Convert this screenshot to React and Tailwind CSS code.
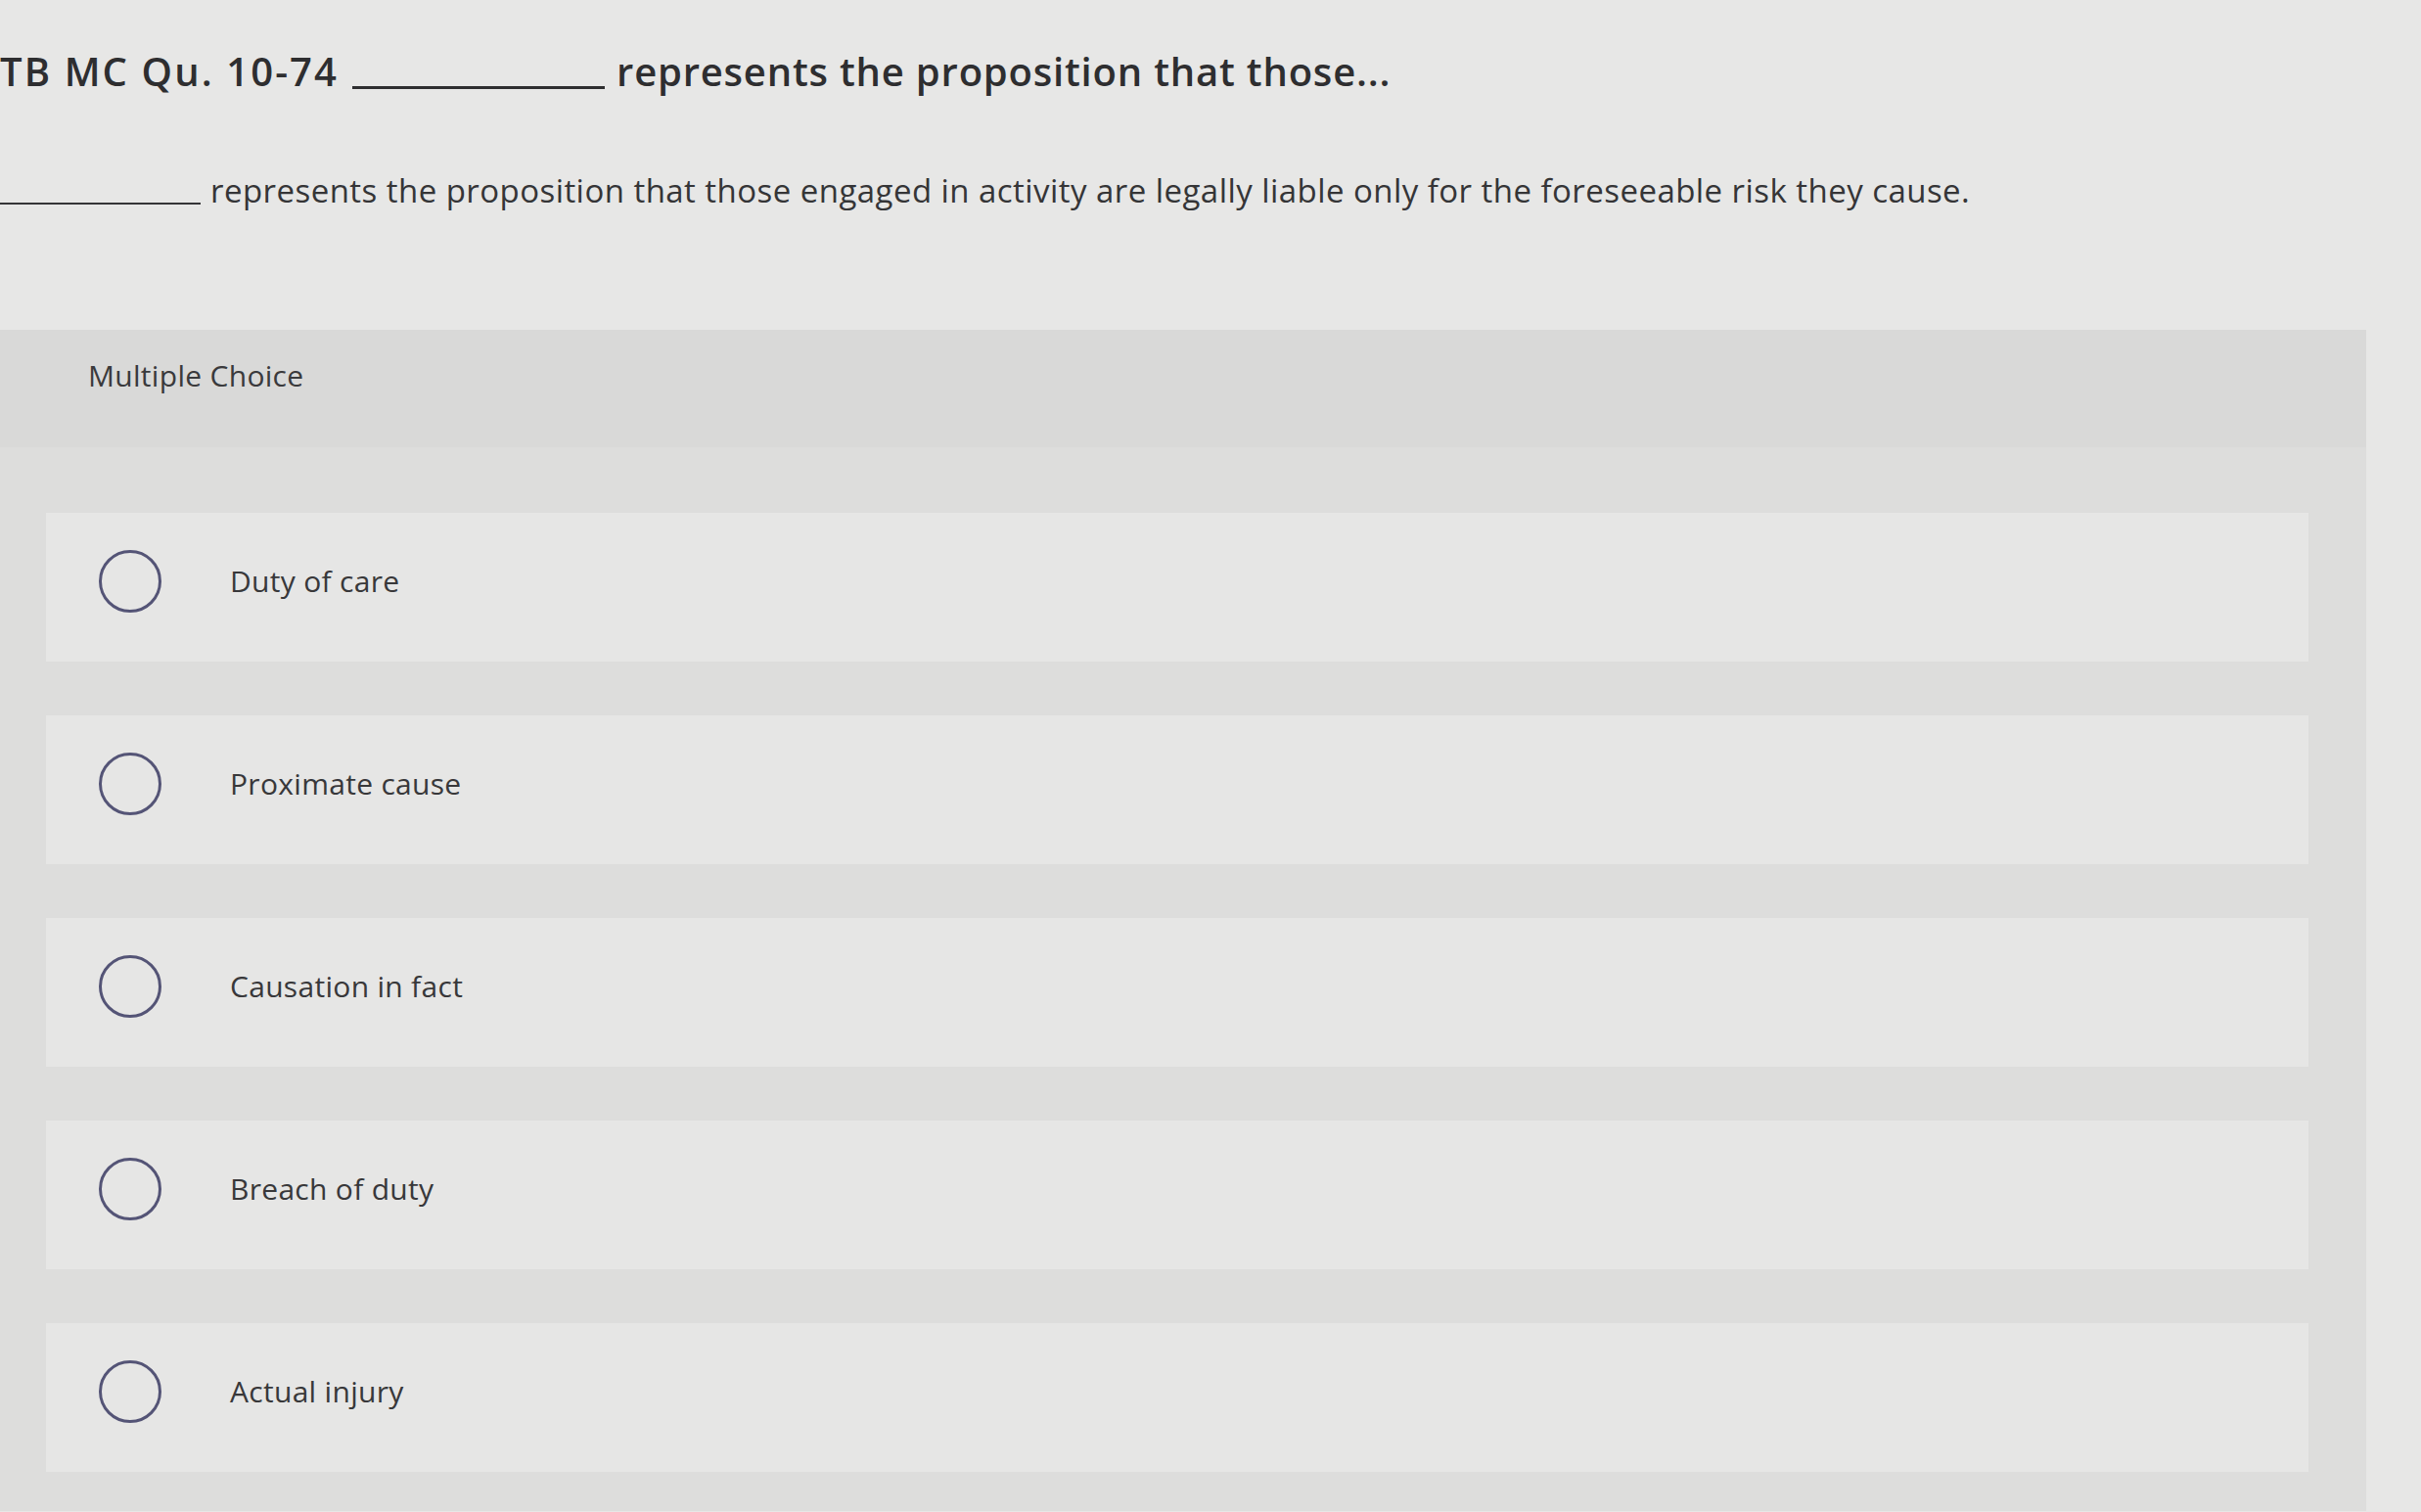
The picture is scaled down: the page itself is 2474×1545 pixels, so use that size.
const options = ["Duty of care", "Proximate cause", "Causation in fact", "Breach of duty", "Actual injury"];

function Radio() {
  return <span className="block h-[64px] w-[64px] shrink-0 rounded-full border-[3px] border-[#545476]" />;
}

export default function App() {
  return (
    <div
      className="h-[1545px] w-[2474px] overflow-hidden bg-[#e7e7e6] text-[#2e2e30]"
      style={{ fontFamily: "'Open Sans', Lato, sans-serif" }}
    >
      <div className="pt-[46px]">
        <h1 className="flex items-end text-[40px] font-semibold leading-[54px] tracking-[0.8px]">
          <span className="tracking-[2.1px]">TB MC Qu. 10-74</span>
          <span className="mb-[9px] ml-[14px] mr-[12px] inline-block w-[258px] border-b-[3px] border-[#2e2e30]" />
          <span>represents the proposition that those...</span>
        </h1>
      </div>

      <p className="mt-[74px] flex items-end text-[33px] leading-[42px] tracking-[0.45px] text-[#353537]">
        <span className="mb-[7px] mr-[10px] inline-block w-[205px] border-b-2 border-[#353537]" />
        <span>
          represents the proposition that those engaged in activity are legally liable only for the foreseeable risk
          they cause.
        </span>
      </p>

      <section className="mt-[121px] w-[2418px] bg-[#dddddc]">
        <div className="h-[120px] bg-[#d9d9d8] pl-[90px] pt-[29px] text-[30px] leading-[36px] tracking-[0.3px] text-[#3a3a3c]">
          Multiple Choice
        </div>

        <div className="flex flex-col gap-[55px] pt-[67px] pb-[40px]">
          {options.map((label) => (
            <div
              key={label}
              className="ml-[47px] flex h-[152px] w-[2312px] items-center bg-[#e6e6e5] pb-[12px] pl-[54px]"
            >
              <Radio />
              <span className="ml-[70px] text-[30px] leading-[36px] tracking-[0.3px] text-[#38383a]">{label}</span>
            </div>
          ))}
        </div>
      </section>
    </div>
  );
}
